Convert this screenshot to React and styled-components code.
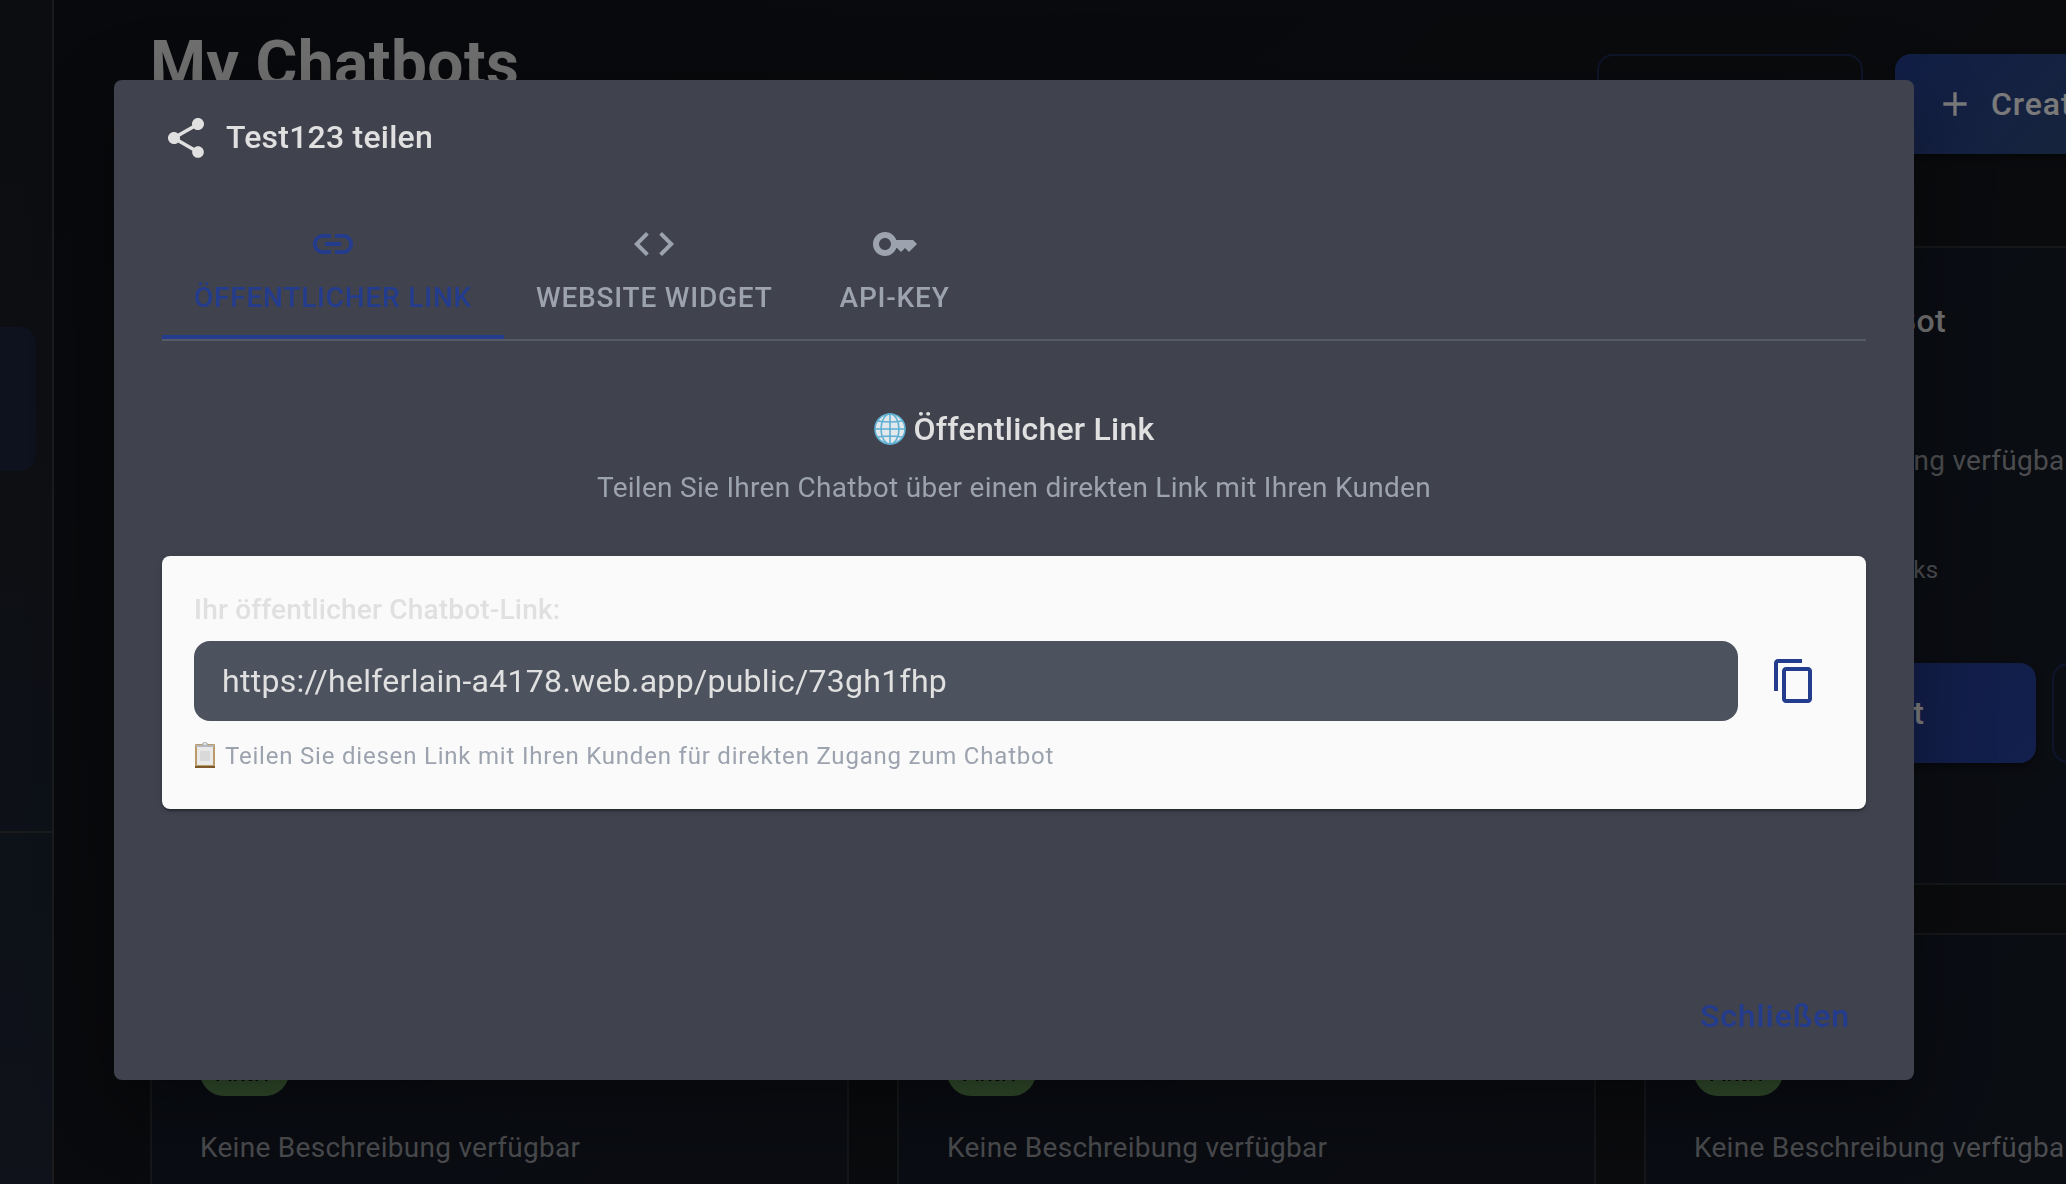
import React from "react";
import styled, { createGlobalStyle } from "styled-components";

const Global = createGlobalStyle`
  * { box-sizing: border-box; }
  html, body { margin: 0; }
  body {
    background: #14161c;
    color: #e0e0e0;
    font-family: Roboto, "Liberation Sans", sans-serif;
    font-size: 32px;
    overflow: hidden;
  }
  button, input { font-family: inherit; letter-spacing: inherit; }
`;

/* Page behind the dialog */

const Page = styled.div`
  display: flex;
  height: 100vh;
  overflow: hidden;
  background: linear-gradient(135deg, #101218 0%, #16181c 100%);
`;

const Sidebar = styled.aside`
  display: flex;
  flex-direction: column;
  flex: 0 0 54px;
  border-right: 2px solid #36373c;
`;

const SideNav = styled.nav`
  flex: 0 0 833px;
  padding-top: 327px;
  border-bottom: 2px solid #36373c;
  background: linear-gradient(180deg, #181a22 0%, #1c1f25 60%, #1a2130 100%);
`;

const SideLink = styled.a`
  display: block;
  width: 36px;
  height: 144px;
  border-radius: 0 16px 16px 0;
  background: #1a243c;
`;

const SideFooter = styled.div`
  flex: 1;
  background: linear-gradient(180deg, #1a2230 0%, #1f2434 100%);
`;

const Main = styled.main`
  flex: 1 0 auto;
  width: 2289px;
  padding: 16px 0 0 96px;
`;

const PageHeader = styled.header`
  display: flex;
  justify-content: space-between;
  width: 2193px;
  height: 230px;
`;

const PageTitle = styled.h1`
  margin: 0;
  font-size: 64px;
  line-height: 98px;
  font-weight: 700;
  letter-spacing: 0.007em;
`;

const HeaderActions = styled.div`
  display: flex;
  gap: 32px;
  align-items: flex-start;
  width: 746px;
  padding-top: 38px;
`;

const PageButton = styled.button`
  display: flex;
  align-items: center;
  justify-content: center;
  gap: 16px;
  flex: 0 0 ${(p) => (p.$width ? `${p.$width}px` : "auto")};
  height: 100px;
  padding: 0 40px;
  border: 0;
  border-radius: 16px;
  background: linear-gradient(135deg, #233c8e 0%, ${(p) => p.$fade || "#263e98"} 100%);
  box-shadow: 0 4px 8px rgba(0, 0, 0, 0.4);
  color: #f5f5f5;
  font-size: 32px;
  font-weight: 500;
  letter-spacing: 0.028em;
`;

const OutlinedButton = styled(PageButton)`
  border: 2px solid #1c2b58;
  background: transparent;
  box-shadow: none;
`;

const CardGrid = styled.div`
  display: grid;
  grid-template-columns: repeat(3, 699px);
  gap: 48px;
`;

const Card = styled.article`
  display: flex;
  flex-direction: column;
  height: 639px;
  padding: 48px;
  border: 2px solid #2c2e34;
  border-radius: 16px;
  background: linear-gradient(135deg, #131926 0%, #151a24 60%, #151a28 100%);
`;

const CardTitle = styled.h2`
  margin: 0 0 15px;
  padding-left: 4px;
  font-size: 32px;
  line-height: 50px;
  font-weight: 500;
  letter-spacing: 0.01em;
`;

const Chip = styled.span`
  align-self: flex-start;
  padding: 2px 16px 0;
  border-radius: 24px;
  background: #669b5a;
  color: #000;
  font-size: 24px;
  line-height: 46px;
  letter-spacing: 0.03em;
`;

const CardText = styled.p`
  margin: 0;
  padding-top: ${(p) => p.$space}px;
  color: #97999f;
  font-size: 28px;
  line-height: 40px;
  letter-spacing: 0.01em;
`;

const CardMeta = styled(CardText)`
  font-size: 24px;
  letter-spacing: 0.017em;
`;

const CardActions = styled.div`
  display: flex;
  gap: 16px;
  padding-top: 73px;
`;

/* Dialog */

const Backdrop = styled.div`
  position: fixed;
  inset: 0;
  display: flex;
  padding: 80px 152px 104px 114px;
  background: rgba(0, 0, 0, 0.5);
`;

const Dialog = styled.section`
  display: flex;
  flex-direction: column;
  flex: 1;
  border-radius: 8px;
  background: #40424e;
  box-shadow: 0 22px 30px -14px rgba(0, 0, 0, 0.2),
    0 48px 76px 6px rgba(0, 0, 0, 0.14), 0 18px 92px 16px rgba(0, 0, 0, 0.12);
`;

const DialogHeader = styled.header`
  display: flex;
  align-items: center;
  gap: 16px;
  padding: 32px 48px;
`;

const DialogTitle = styled.h2`
  margin: 0;
  font-size: 32px;
  line-height: 51px;
  font-weight: 500;
  letter-spacing: 0.007em;
`;

const DialogBody = styled.div`
  flex: 1;
  padding: 0 48px;
`;

const Tabs = styled.div`
  display: flex;
  border-bottom: 2px solid #555a66;
`;

const Tab = styled.button`
  display: flex;
  flex-direction: column;
  align-items: center;
  justify-content: center;
  gap: 12px;
  min-width: 180px;
  height: 144px;
  padding: 0 32px;
  border: 0;
  background: none;
  box-shadow: ${(p) => (p.$active ? "inset 0 -4px #233c8e" : "none")};
  color: ${(p) => (p.$active ? "#233c8e" : "#9ca3af")};
  font-size: 28px;
  line-height: 35px;
  font-weight: 500;
  letter-spacing: 0.028em;
  text-transform: uppercase;
`;

const Intro = styled.div`
  display: flex;
  flex-direction: column;
  align-items: center;
  gap: 13px;
  padding: 63px 0 48px;
`;

const IntroTitle = styled.h3`
  display: flex;
  align-items: center;
  gap: 8px;
  margin: 0;
  font-size: 32px;
  line-height: 51px;
  font-weight: 500;
  letter-spacing: 0.007em;
`;

const IntroText = styled.p`
  margin: 0;
  color: #9ca3af;
  font-size: 28px;
  line-height: 40px;
  letter-spacing: 0.01em;
`;

const LinkCard = styled.div`
  display: flex;
  flex-direction: column;
  padding: 32px;
  border-radius: 8px;
  background: #fafafa;
  box-shadow: 0 4px 2px -2px rgba(0, 0, 0, 0.2), 0 2px 2px rgba(0, 0, 0, 0.14),
    0 2px 6px rgba(0, 0, 0, 0.12);
`;

const LinkLabel = styled.label`
  padding-bottom: 9px;
  font-size: 28px;
  line-height: 44px;
  font-weight: 500;
  letter-spacing: 0.007em;
`;

const LinkRow = styled.div`
  display: flex;
  gap: 16px;
`;

const LinkInput = styled.input`
  flex: 1;
  min-width: 0;
  height: 80px;
  padding: 0 28px;
  border: 0;
  border-radius: 16px;
  background: #4d535e;
  color: #e0e0e0;
  font-size: 32px;
  letter-spacing: 0.009em;
`;

const IconButton = styled.button`
  display: flex;
  align-items: center;
  justify-content: center;
  width: 80px;
  height: 80px;
  padding: 0;
  border: 0;
  background: none;
  color: #233c8e;
`;

const Hint = styled.p`
  display: flex;
  align-items: center;
  gap: 8px;
  margin: 0;
  padding-top: 14px;
  color: #9ca3af;
  font-size: 24px;
  line-height: 42px;
  letter-spacing: 0.033em;
`;

const DialogFooter = styled.footer`
  display: flex;
  justify-content: flex-end;
  padding: 16px 48px 32px;
`;

const TextButton = styled.button`
  padding: 0 16px;
  border: 0;
  background: none;
  color: #233c8e;
  font-size: 32px;
  line-height: 64px;
  font-weight: 500;
  letter-spacing: 0.028em;
`;

const PATHS = {
  share:
    "M18 16.08c-.76 0-1.44.3-1.96.77L8.91 12.7c.05-.23.09-.46.09-.7s-.04-.47-.09-.7l7.05-4.11c.54.5 1.25.81 2.04.81 1.66 0 3-1.34 3-3s-1.34-3-3-3-3 1.34-3 3c0 .24.04.47.09.7L8.04 9.81C7.5 9.31 6.79 9 6 9c-1.66 0-3 1.34-3 3s1.34 3 3 3c.79 0 1.5-.31 2.04-.81l7.12 4.16c-.05.21-.08.43-.08.65 0 1.61 1.31 2.92 2.92 2.92s2.92-1.31 2.92-2.92-1.31-2.92-2.92-2.92",
  link: "M3.9 12c0-1.71 1.39-3.1 3.1-3.1h4V7H7c-2.76 0-5 2.24-5 5s2.24 5 5 5h4v-1.9H7c-1.71 0-3.1-1.39-3.1-3.1M8 13h8v-2H8zm9-6h-4v1.9h4c1.71 0 3.1 1.39 3.1 3.1s-1.39 3.1-3.1 3.1h-4V17h4c2.76 0 5-2.24 5-5s-2.24-5-5-5",
  code: "M9.4 16.6 4.8 12l4.6-4.6L8 6l-6 6 6 6zm5.2 0 4.6-4.6-4.6-4.6L16 6l6 6-6 6z",
  key: "M21 10h-8.35C11.83 7.67 9.61 6 7 6c-3.31 0-6 2.69-6 6s2.69 6 6 6c2.61 0 4.83-1.67 5.65-4H13l2 2 2-2 2 2 4-4.04zM7 15c-1.65 0-3-1.35-3-3s1.35-3 3-3 3 1.35 3 3-1.35 3-3 3",
  copy: "M16 1H4c-1.1 0-2 .9-2 2v14h2V3h12zm3 4H8c-1.1 0-2 .9-2 2v14c0 1.1.9 2 2 2h11c1.1 0 2-.9 2-2V7c0-1.1-.9-2-2-2m0 16H8V7h11z",
  add: "M19 13h-6v6h-2v-6H5v-2h6V5h2v6h6z",
};

const Icon = ({ name, size = 48 }) => (
  <svg width={size} height={size} viewBox="0 0 24 24" fill="currentColor" aria-hidden="true">
    <path d={PATHS[name]} />
  </svg>
);

const Globe = () => (
  <svg width="32" height="34" viewBox="0 0 32 34" fill="none" aria-hidden="true">
    <circle cx="16" cy="16" r="15" fill="#e2e8ec" />
    <g stroke="#5fb0d3" strokeWidth="1.6">
      <circle cx="16" cy="16" r="15" />
      <ellipse cx="16" cy="16" rx="9" ry="15" />
      <path d="M16 1v30M1 16h30M4 8q12 2 24 0M4 24q12-2 24 0" />
    </g>
  </svg>
);

const Clipboard = () => (
  <svg width="23" height="28" viewBox="0 0 23 28" fill="none" aria-hidden="true">
    <rect x="1" y="2" width="20" height="24" rx="1" fill="#b99a68" />
    <path d="M1 24h20v2H1z" fill="#7d5a2c" />
    <path d="M3 5h16v18H3z" fill="#e9e9e9" />
    <path d="M6 9h10v10H6z" fill="#d9d9d9" />
    <path d="M2 5V3h6q0-3 3-3t3 3h6v2z" fill="#b4b8bc" />
    <circle cx="11" cy="2" r="1" fill="#fafafa" />
  </svg>
);

const BOTS = [
  "Service Bot", "Support Bot", "Mein eigener Bot",
  "Test123", "Test Bot", "Demo Bot",
];

const TABS = [
  { icon: "link", label: "Öffentlicher Link", active: true },
  { icon: "code", label: "Website Widget" },
  { icon: "key", label: "API-Key" },
];

export default function App() {
  return (
    <>
      <Global />
      <Page aria-hidden="true">
        <Sidebar>
          <SideNav>
            <SideLink href="#chatbots" />
          </SideNav>
          <SideFooter />
        </Sidebar>
        <Main>
          <PageHeader>
            <PageTitle>My Chatbots</PageTitle>
            <HeaderActions>
              <OutlinedButton $width={266} />
              <PageButton $fade="#34506a">
                <Icon name="add" size={40} />
                Create Chatbot
              </PageButton>
            </HeaderActions>
          </PageHeader>
          <CardGrid>
            {BOTS.map((name) => (
              <Card key={name}>
                <CardTitle>{name}</CardTitle>
                <Chip>Aktiv</Chip>
                <CardText $space={32}>Keine Beschreibung verfügbar</CardText>
                <CardMeta $space={69}>0 Dokumente · 0 Links</CardMeta>
                <CardActions>
                  <PageButton $width={342}>Chatbot</PageButton>
                  <OutlinedButton $width={240} />
                </CardActions>
              </Card>
            ))}
          </CardGrid>
        </Main>
      </Page>
      <Backdrop>
        <Dialog role="dialog" aria-modal="true" aria-labelledby="share-title">
          <DialogHeader>
            <Icon name="share" />
            <DialogTitle id="share-title">Test123 teilen</DialogTitle>
          </DialogHeader>
          <DialogBody>
            <Tabs role="tablist">
              {TABS.map((tab) => (
                <Tab key={tab.label} role="tab" aria-selected={!!tab.active} $active={tab.active}>
                  <Icon name={tab.icon} />
                  {tab.label}
                </Tab>
              ))}
            </Tabs>
            <Intro>
              <IntroTitle>
                <Globe />
                Öffentlicher Link
              </IntroTitle>
              <IntroText>Teilen Sie Ihren Chatbot über einen direkten Link mit Ihren Kunden</IntroText>
            </Intro>
            <LinkCard>
              <LinkLabel htmlFor="public-link">Ihr öffentlicher Chatbot-Link:</LinkLabel>
              <LinkRow>
                <LinkInput
                  id="public-link"
                  readOnly
                  value="https://helferlain-a4178.web.app/public/73gh1fhp"
                />
                <IconButton aria-label="Link kopieren">
                  <Icon name="copy" />
                </IconButton>
              </LinkRow>
              <Hint>
                <Clipboard />
                Teilen Sie diesen Link mit Ihren Kunden für direkten Zugang zum Chatbot
              </Hint>
            </LinkCard>
          </DialogBody>
          <DialogFooter>
            <TextButton>Schließen</TextButton>
          </DialogFooter>
        </Dialog>
      </Backdrop>
    </>
  );
}
